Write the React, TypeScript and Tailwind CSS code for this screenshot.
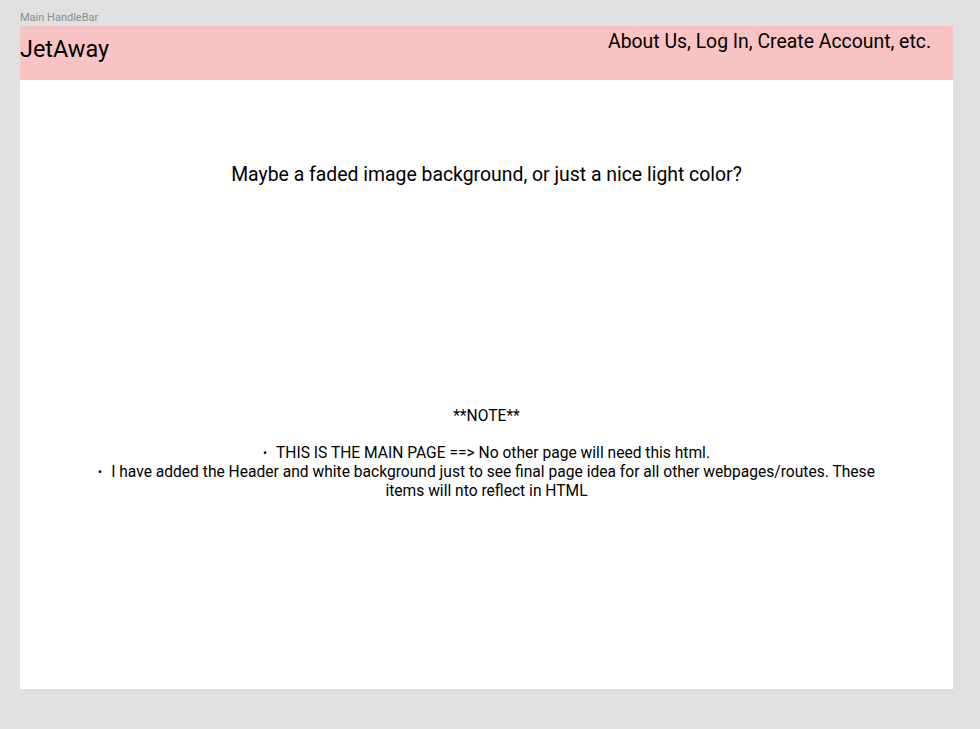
export default function App() {
  return (
    <div
      className="flex h-[729px] w-[980px] flex-col bg-[#e0e0e0] px-5 pt-[10px]"
      style={{ fontFamily: 'Roboto, "Liberation Sans", sans-serif' }}
    >
      <p className="h-4 text-[11px] leading-4 text-[#8c8c8c]">Main HandleBar</p>
      <div className="flex h-[663px] w-[933px] flex-col bg-white">
        <header className="flex h-[54px] items-start justify-between bg-[#f9c3c3]">
          <h1 className="mt-[9px] text-[23.4px] leading-7 text-black">JetAway</h1>
          <nav className="mr-[22px] mt-[4px] text-[19.4px] leading-6 text-black">
            About Us, Log In, Create Account, etc.
          </nav>
        </header>
        <main className="flex flex-1 flex-col items-center">
          <p className="mt-[83px] text-[19.4px] leading-6 text-black">
            Maybe a faded image background, or just a nice light color?
          </p>
          <div className="mt-[220px] w-[800px] text-center text-[15.6px] leading-[18.3px] text-black">
            <p>**NOTE**</p>
            <p className="h-[18.3px]" />
            <ul>
              <li>
                <span className="mr-[9px] text-[12px] align-middle">•</span>THIS IS THE MAIN PAGE ==&gt; No other page will need this html.
              </li>
              <li>
                <span className="mr-[9px] text-[12px] align-middle">•</span>I have added the Header and white background just to see final page idea for all other webpages/routes. These items will nto reflect in HTML
              </li>
            </ul>
          </div>
        </main>
      </div>
    </div>
  )
}
